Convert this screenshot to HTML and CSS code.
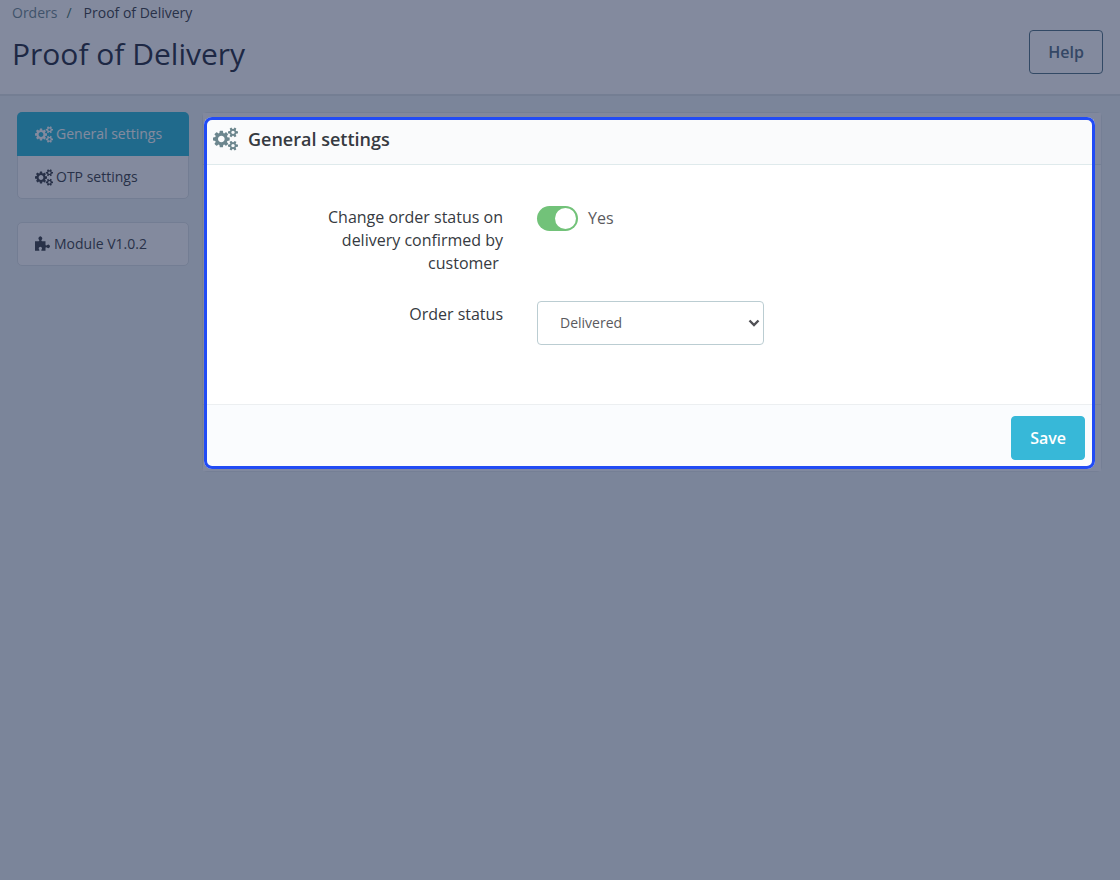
FILE: index.html
```html
<!DOCTYPE html>
<html lang="en">
<head>
<meta charset="utf-8">
<title>Proof of Delivery</title>
<meta name="viewport" content="width=device-width, initial-scale=1">
<link rel="stylesheet" href="styles.css">
</head>
<body>
<svg class="sprite" aria-hidden="true">
  <symbol id="cogs" viewBox="0 0 1920 1792">
    <path d="M896 896q0-106-75-181t-181-75-181 75-75 181 75 181 181 75 181-75 75-181zm768 512q0-52-38-90t-90-38-90 38-38 90q0 53 37.500 90.500t90.500 37.500 90.500-37.500 37.500-90.500zm0-1024q0-52-38-90t-90-38-90 38-38 90q0 53 37.500 90.500t90.500 37.500 90.500-37.500 37.500-90.500zm-384 421v185q0 10-7 19.500t-16 10.500l-155 24q-11 35-32 76 34 48 90 115 7 11 7 20 0 12-7 19-23 30-82.500 89.500t-78.500 59.500q-11 0-21-7l-115-90q-37 19-77 31-11 108-23 155-7 24-30 24h-186q-11 0-20-7.500t-10-17.500l-23-153q-34-10-75-31l-118 89q-7 7-20 7-11 0-21-8-144-133-144-160 0-9 7-19 10-14 41-53t47-61q-23-44-35-82l-152-24q-10-1-17-9.500t-7-19.500v-185q0-10 7-19.500t16-10.500l155-24q11-35 32-76-34-48-90-115-7-11-7-20 0-12 7-20 22-30 82-89t79-59q11 0 21 7l115 90q34-18 77-32 11-108 23-154 7-24 30-24h186q11 0 20 7.500t10 17.500l23 153q34 10 75 31l118-89q8-7 20-7 11 0 21 8 144 133 144 160 0 8-7 19-12 16-42 54t-45 60q23 48 34 82l152 23q10 2 17 10.500t7 19.500zm640 533v140q0 16-149 31-12 27-30 52 51 113 51 138 0 4-4 7-122 71-124 71-8 0-46-47t-52-68q-20 2-30 2t-30-2q-14 21-52 68t-46 47q-2 0-124-71-4-3-4-7 0-25 51-138-18-25-30-52-149-15-149-31v-140q0-16 149-31 13-29 30-52-51-113-51-138 0-4 4-7 4-2 35-20t59-34 30-16q8 0 46 46.500t52 67.500q20-2 30-2t30 2q51-71 92-112l6-2q4 0 124 70 4 3 4 7 0 25-51 138 17 23 30 52 149 15 149 31zm0-1024v140q0 16-149 31-12 27-30 52 51 113 51 138 0 4-4 7-122 71-124 71-8 0-46-47t-52-68q-20 2-30 2t-30-2q-14 21-52 68t-46 47q-2 0-124-71-4-3-4-7 0-25 51-138-18-25-30-52-149-15-149-31v-140q0-16 149-31 13-29 30-52-51-113-51-138 0-4 4-7 4-2 35-20t59-34 30-16q8 0 46 46.500t52 67.500q20-2 30-2t30 2q51-71 92-112l6-2q4 0 124 70 4 3 4 7 0 25-51 138 17 23 30 52 149 15 149 31z"/>
  </symbol>
</svg>

<header class="page-header">
  <div>
    <nav class="breadcrumb" aria-label="Breadcrumb">
      <a href="#orders">Orders</a><span class="separator">/</span><span>Proof of Delivery</span>
    </nav>
    <h1 class="page-title">Proof of Delivery</h1>
  </div>
  <button class="button button-outline" type="button">Help</button>
</header>

<main class="layout">
  <nav class="sidebar" aria-label="Module sections">
    <div class="menu">
      <a class="menu-item active" href="#general"><svg class="menu-icon"><use href="#cogs"/></svg>General settings</a>
      <a class="menu-item" href="#otp"><svg class="menu-icon"><use href="#cogs"/></svg>OTP settings</a>
    </div>
    <div class="menu">
      <a class="menu-item" href="#module"><svg class="puzzle-icon" viewBox="0 0 16 16"><path d="M0 5.200h3.600q.8 0 .7-.8-.1-.5-.5-1A1.900 1.900 0 1 1 6.900 3.400q-.4.500-.5 1-.1.800.7.800H10.500v3.600q0 .8.800.7.500-.1.900-.5a1.700 1.700 0 1 1 0 2.700q-.4-.4-.9-.5-.8-.1-.8.700v2.900H7q-.8 0-.7-.8.1-.4.400-.8a1.600 1.600 0 1 0-2.700 0q.3.400.4.800.1.800-.7.800H0z"/></svg>Module V1.0.2</a>
    </div>
  </nav>

  <form class="panel">
    <h2 class="panel-heading"><svg class="heading-icon"><use href="#cogs"/></svg>General settings</h2>
    <div class="panel-body">
      <label class="field-label" for="change-status">Change order status on delivery confirmed by customer&nbsp;</label>
      <div class="switch-row">
        <input class="switch" id="change-status" type="checkbox" role="switch" checked>
        <span>Yes</span>
      </div>
      <label class="field-label" for="order-status">Order status</label>
      <div class="select-wrap">
        <select class="select" id="order-status"><option>Delivered</option></select>
        <svg class="chevron" viewBox="0 0 12 8" aria-hidden="true"><path d="M1.500 1.500 6 6l4.500-4.500"/></svg>
      </div>
    </div>
    <div class="panel-footer"><button class="button button-primary" type="submit">Save</button></div>
    <div class="spotlight"></div>
  </form>
</main>
</body>
</html>
```
FILE: styles.css
```css
* { box-sizing: border-box; }

body {
  margin: 0;
  min-height: 100vh;
  overflow-x: hidden;
  background: #edf3f5;
  color: #363a41;
  font: 14px/20px "Open Sans", "Noto Sans", sans-serif;
}

.sprite { position: absolute; width: 0; height: 0; }
svg { fill: currentColor; }
a { color: inherit; text-decoration: none; }

.page-header {
  display: flex;
  align-items: flex-end;
  justify-content: space-between;
  padding: 4px 17px 20px 12px;
  border-bottom: 2px solid #dde4e6;
  background: #fff;
}

.breadcrumb { line-height: 18px; }
.breadcrumb a { color: #6c868e; }
.separator { margin: 0 12px 0 9px; color: #407060; }

.page-title {
  margin: 12px 0 0;
  color: #202738;
  font-size: 30px;
  font-weight: 400;
  line-height: 40px;
}

.button {
  height: 44px;
  padding: 0 18px;
  border: 1px solid;
  border-radius: 4px;
  font: 600 16px/22px "Open Sans", "Noto Sans", sans-serif;
}
.button-outline { border-color: #4d7080; background: transparent; color: #506b80; }
.button-primary { border-color: #37b8d8; background: #37b8d8; color: #fff; }

.layout {
  display: flex;
  align-items: flex-start;
  gap: 13px;
  padding: 16px 18px 16px 17px;
}

.sidebar { flex: 0 0 172px; display: grid; gap: 23px; }

.menu {
  border: 1px solid #dbe3e6;
  border-radius: 5px;
  background: #fff;
}
.menu-item {
  display: flex;
  align-items: center;
  height: 42px;
  padding: 0 17px;
}
.menu-item.active {
  height: 44px;
  margin: -1px -1px 0;
  padding: 0 18px;
  border-radius: 5px 5px 0 0;
  background: #25b9d7;
  color: #fff;
}
.menu-icon { width: 18px; height: 17px; margin-right: 3px; }
.puzzle-icon { width: 16px; height: 16px; margin-right: 3px; }

.panel {
  position: relative;
  flex: 1;
  border: 1px solid #e0e7ea;
  border-radius: 5px;
  background: #fff;
}

.panel-heading {
  display: flex;
  align-items: center;
  gap: 10px;
  height: 52px;
  margin: 0;
  padding: 0 10px;
  border-bottom: 1px solid #dfeaec;
  background: #fafbfc;
  font-size: 18px;
  font-weight: 600;
  line-height: 24px;
}
.heading-icon { width: 25px; height: 24px; color: #6c868e; }

.panel-body {
  display: grid;
  grid-template-columns: 300px 1fr;
  gap: 26px 34px;
  padding: 41px 0 59px;
  font-size: 16px;
  line-height: 23px;
}
.field-label { padding-left: 110px; text-align: right; }
.field-label:last-of-type { padding-top: 2px; }

.switch-row { display: flex; align-items: flex-start; gap: 10px; color: #5a5a5e; line-height: 25px; }
.switch {
  appearance: none;
  display: flex;
  justify-content: flex-end;
  width: 41px;
  height: 25px;
  margin: 0;
  padding: 2px;
  border-radius: 13px;
  background: #72c279;
}
.switch::before { content: ""; width: 21px; height: 21px; border-radius: 50%; background: #fff; }

.select-wrap { position: relative; width: 227px; height: 44px; }
.select {
  appearance: none;
  width: 100%;
  height: 44px;
  padding: 0 22px;
  border: 1px solid #bbcdd2;
  border-radius: 4px;
  background: #fff;
  color: #5a5a5e;
  font: 14px/20px "Open Sans", "Noto Sans", sans-serif;
}
.chevron {
  position: absolute;
  top: 18px;
  right: 4px;
  width: 12px;
  height: 8px;
  fill: none;
  stroke: #505055;
  stroke-width: 2.4;
  pointer-events: none;
}

.panel-footer {
  display: flex;
  justify-content: flex-end;
  padding: 11px 16px;
  border-top: 1px solid #eceff1;
  background: #fafcfe;
}

.spotlight {
  position: absolute;
  inset: 4px 6px 2px 1px;
  border: 3px solid #214bf5;
  border-radius: 8px;
  box-shadow: 0 0 0 200vmax rgba(30, 41, 78, 0.55);
  pointer-events: none;
}
```
